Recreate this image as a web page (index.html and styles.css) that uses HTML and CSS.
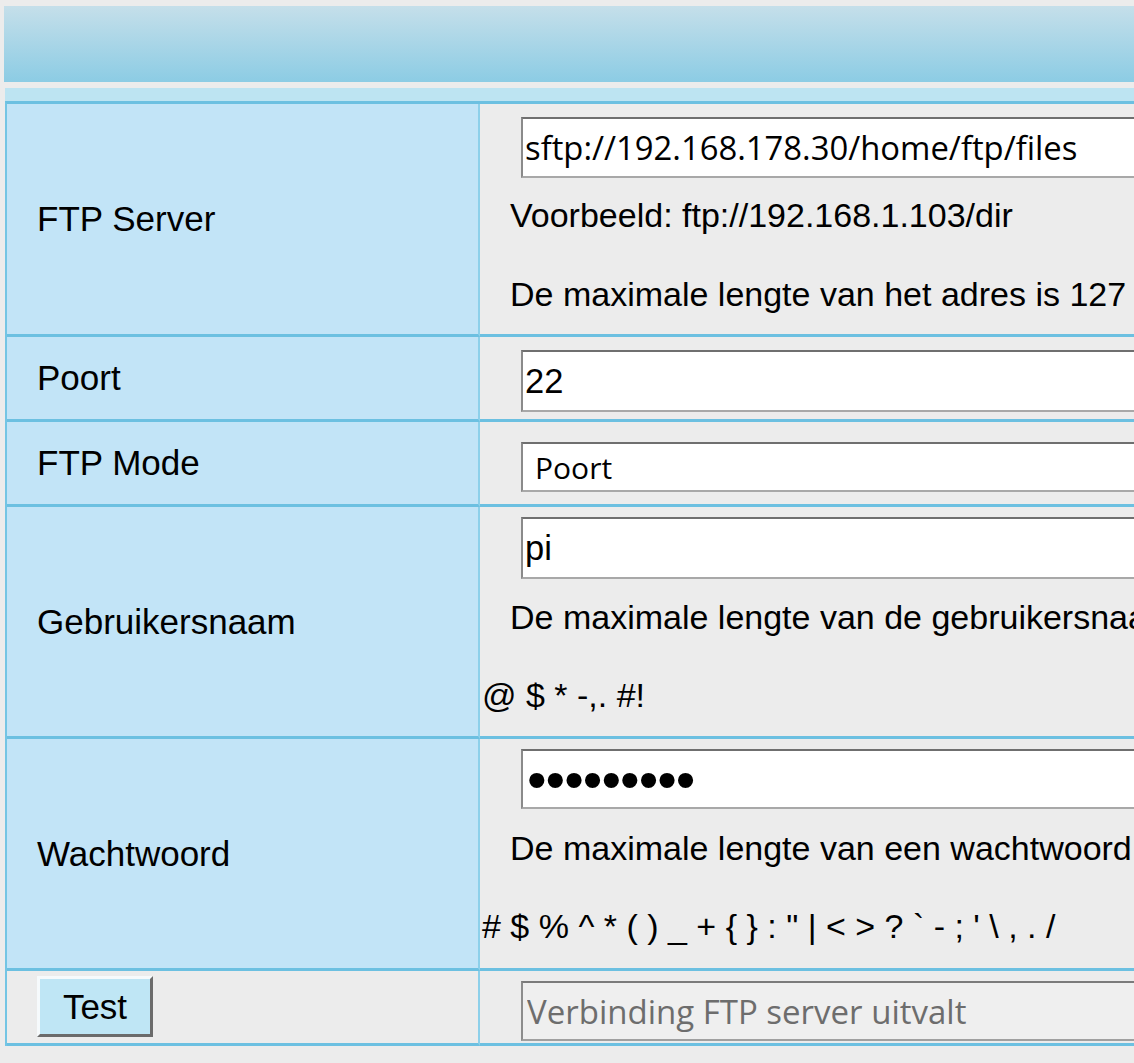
FILE: index.html
```html
<!DOCTYPE html>
<html lang="nl">
<head>
<meta charset="utf-8">
<title>FTP instellingen</title>
<link rel="stylesheet" href="styles.css">
</head>
<body>
<div class="page">
  <div class="banner"></div>
  <div class="subbar"></div>
  <div class="form">
    <div class="label">FTP Server</div>
    <div class="value row-server">
      <input class="field field-os" type="text" value="sftp://192.168.178.30/home/ftp/files">
      <div class="hint gap-first">Voorbeeld: ftp://192.168.1.103/dir</div>
      <div class="hint gap-next">De maximale lengte van het adres is 127 tekens</div>
    </div>

    <div class="label">Poort</div>
    <div class="value row-port">
      <input class="field field-arial" type="text" value="22">
    </div>

    <div class="label">FTP Mode</div>
    <div class="value row-mode">
      <select class="field select">
        <option selected>Poort</option>
        <option>Passief</option>
      </select>
    </div>

    <div class="label">Gebruikersnaam</div>
    <div class="value row-user">
      <input class="field field-arial" type="text" value="pi">
      <div class="hint gap-first">De maximale lengte van de gebruikersnaam is 20 tekens, toegestaan zijn letters, cijfers en _</div>
      <div class="cont gap-mid">@ $ * -,. #!</div>
    </div>

    <div class="label">Wachtwoord</div>
    <div class="value row-pass">
      <input class="field field-pass" type="password" value="123456789">
      <div class="hint gap-first">De maximale lengte van een wachtwoord is 20 tekens, toegestaan zijn letters, cijfers en ~ ! @</div>
      <div class="cont gap-mid"># $ % ^ * ( ) _ + { } : " | &lt; &gt; ? ` - ; ' \ , . /</div>
    </div>

    <div class="label label-plain">
      <button class="btn" type="button">Test</button>
    </div>
    <div class="value row-test">
      <input class="field field-os field-off" type="text" value="Verbinding FTP server uitvalt" disabled>
    </div>
  </div>
</div>
</body>
</html>
```

FILE: styles.css
```css
* {
  box-sizing: border-box;
}

html,
body {
  margin: 0;
  padding: 0;
}

body {
  background: #ececec;
  overflow: hidden;
  font-family: "Liberation Sans", Arial, sans-serif;
  font-size: 34px;
  color: #000;
}

.page {
  width: 1700px;
  padding: 6px 0 0 4px;
}

.banner {
  height: 76px;
  background: linear-gradient(#c5dfea, #8ccce4);
}

.subbar {
  margin: 6px 0 0 1px;
  height: 13px;
  background: #bde4f2;
}

.form {
  margin-left: 1px;
  display: grid;
  grid-template-columns: 473px 1200px;
  border-top: 3px solid #6cc0e1;
  border-left: 2px solid #74c5e4;
}

.label {
  display: flex;
  align-items: center;
  padding-left: 30px;
  background: #c2e4f7;
  border-right: 2px solid #8dd0ea;
  border-bottom: 3px solid #6cc0e1;
  white-space: nowrap;
  font-size: 35px;
}

.label-plain {
  align-items: flex-start;
  background: #ececec;
}

.value {
  background: #ececec;
  border-bottom: 3px solid #6cc0e1;
}

.row-server {
  padding: 13px 0 20px;
}

.row-port {
  padding: 13px 0 7px;
}

.row-mode {
  padding: 20px 0 12px;
}

.row-user {
  padding: 10px 0 21px;
}

.row-pass {
  padding: 10px 0 22px;
}

.row-test {
  padding: 10px 0 2px;
}

.field {
  display: block;
  margin: 0 0 0 41px;
  width: 1000px;
  height: 61px;
  padding: 0 2px;
  background: #fff;
  border: 2px solid;
  border-color: #6f6f6f #a4a4a4 #a8a8a8 #8a8a8a;
  border-radius: 0;
  outline: none;
  color: #000;
}

.field-os {
  font-family: "Open Sans", "Liberation Sans", sans-serif;
  font-size: 32.8px;
}

.field-arial {
  height: 62px;
  font-family: "Liberation Sans", Arial, sans-serif;
  font-size: 34.5px;
}

.select {
  -webkit-appearance: none;
  appearance: none;
  height: 50px;
  padding: 0 0 0 12px;
  font-family: "Open Sans", "Liberation Sans", sans-serif;
  font-size: 30px;
}

.field-pass {
  height: 60px;
  padding: 0 4px;
  font-family: "Liberation Sans", Arial, sans-serif;
  font-size: 56px;
  letter-spacing: -1px;
}

.field-off {
  height: 60px;
  padding: 0 4px;
  background: #efefef;
  border-color: #7b7b7b #9c9c9c #a0a0a0 #8c8c8c;
  color: #6d6d6d;
  font-size: 33px;
}

.hint,
.cont {
  line-height: 39px;
  white-space: nowrap;
}

.hint {
  padding-left: 30px;
}

.cont {
  padding-left: 2px;
}

.gap-first {
  margin-top: 18px;
}

.row-user .gap-first {
  margin-top: 19px;
}

.row-pass .gap-first {
  margin-top: 20px;
}

.gap-next {
  margin-top: 40px;
}

.gap-mid {
  margin-top: 39px;
}

.btn {
  margin-top: 5px;
  width: 116px;
  height: 61px;
  padding: 0;
  background: #bfe6f5;
  border: 3px solid;
  border-color: #f6fafc #6b6b6b #6b6b6b #f6fafc;
  border-radius: 0;
  font-family: "Liberation Sans", Arial, sans-serif;
  font-size: 35px;
  color: #000;
}
```
